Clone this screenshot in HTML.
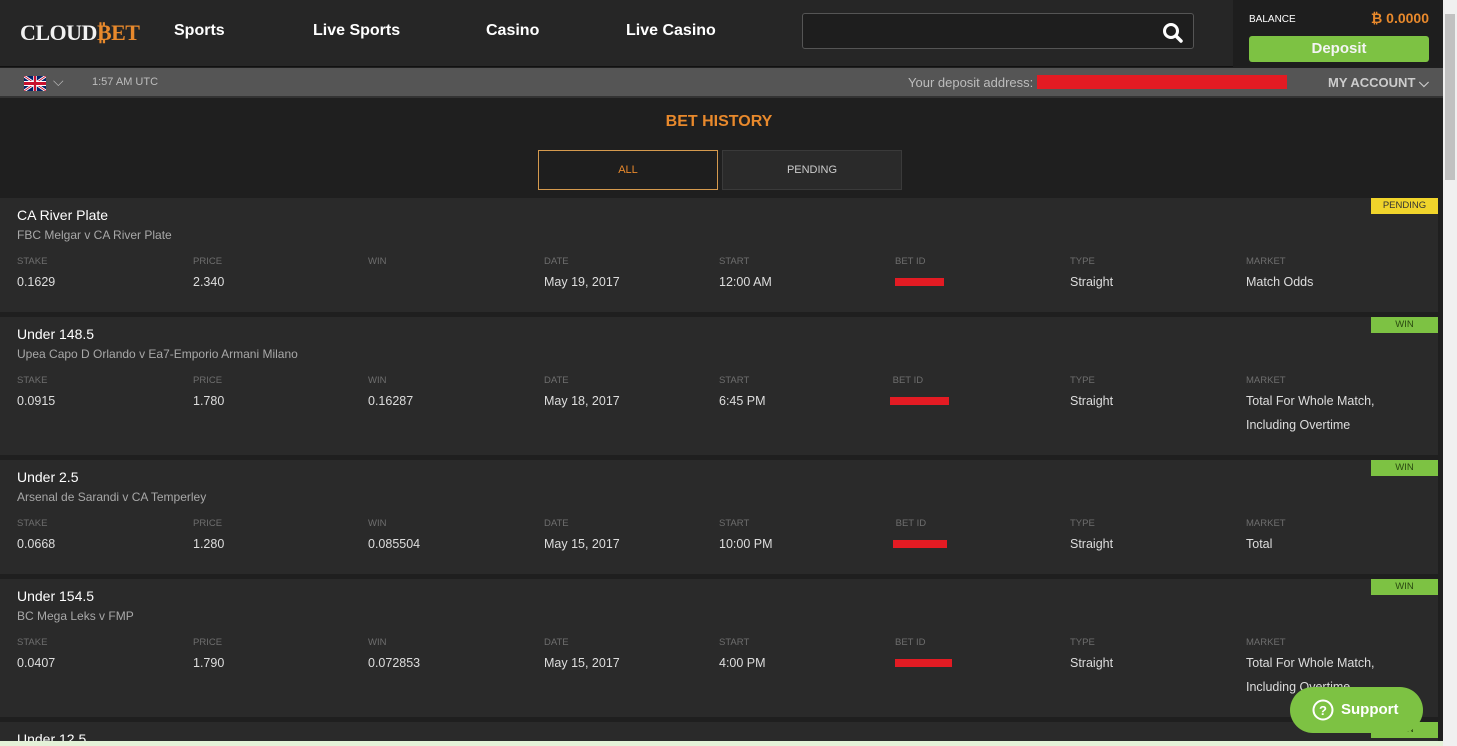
<!DOCTYPE html>
<html><head><meta charset="utf-8"><style>
*{box-sizing:border-box;margin:0;padding:0}
html,body{width:1457px;height:746px;overflow:hidden}
body{background:#1f1f1f;font-family:"Liberation Sans",sans-serif;position:relative;color:#eee}
.hdr{position:absolute;left:0;top:0;width:1443px;height:67px;background:#262626;border-bottom:1px solid #111}
.logo{position:absolute;left:20px;top:20px;font-family:"Liberation Serif",serif;font-weight:bold;font-size:22px;color:#f2f2f2;letter-spacing:-0.5px}
.logo span{color:#e8892c}
.nav{position:absolute;top:22px;font-weight:bold;font-size:16px;color:#fff}
.search{position:absolute;left:802px;top:13px;width:392px;height:36px;border:1px solid #555;border-radius:3px;background:#1e1e1e}
.bal{position:absolute;left:1233px;top:0;width:210px;height:67px;background:#1e1e1e}
.sub{position:absolute;left:0;top:68px;width:1443px;height:30px;background:#555;border-bottom:2px solid #333}
.sub .t{position:absolute;top:8px;font-size:12px;color:#bdbdbd}
.scroll{position:absolute;left:1443px;top:0;width:14px;height:746px;background:#f0f0f0}
.card{position:absolute;left:0;width:1438px;background:#2a2a2a}
.card .ti{position:absolute;left:17px;top:9px;font-size:14px;color:#fff}
.card .su{position:absolute;left:17px;top:30px;font-size:12px;color:#a8a8a8}
.col{position:absolute;top:58px}
.col .l{font-size:9.5px;color:#6e6e6e}
.col .v{font-size:12.5px;color:#ddd;line-height:24px;margin-top:3px}
.badge{position:absolute;right:0;top:0;width:67px;height:16px;font-size:9.5px;text-align:center;line-height:16px}
.red{display:inline-block;background:#e31b23;height:8px}
</style></head><body>
<div class="hdr">
<div class="logo">CLOUD<span>₿ET</span></div>
<div class="nav" style="left:174px">Sports</div>
<div class="nav" style="left:313px">Live Sports</div>
<div class="nav" style="left:486px">Casino</div>
<div class="nav" style="left:626px">Live Casino</div>
<div class="search"><svg width="24" height="24" viewBox="0 0 24 24" style="position:absolute;left:358px;top:7px"><circle cx="10" cy="10" r="6.5" stroke="#fff" stroke-width="3" fill="none"/><path d="M15 15l5 5" stroke="#fff" stroke-width="3.5" stroke-linecap="round"/></svg></div>
<div class="bal">
<div style="position:absolute;left:16px;top:14px;font-size:10px;color:#fff">BALANCE</div>
<div style="position:absolute;right:14px;top:10px;font-size:14px;font-weight:bold;color:#e8892c">₿ 0.0000</div>
<div style="position:absolute;left:16px;top:36px;width:180px;height:26px;background:#7dc243;border-radius:3px;text-align:center;line-height:26px;font-weight:bold;font-size:15px;color:#f4f4f4">Deposit</div>
</div>
</div>
<div class="sub">
<svg width="22" height="15" viewBox="0 0 60 30" style="position:absolute;left:24px;top:8px" preserveAspectRatio="none"><rect width="60" height="30" fill="#012169"/><path d="M0 0L60 30M60 0L0 30" stroke="#fff" stroke-width="6"/><path d="M0 0L60 30M60 0L0 30" stroke="#C8102E" stroke-width="2"/><path d="M30 0v30M0 15h60" stroke="#fff" stroke-width="10"/><path d="M30 0v30M0 15h60" stroke="#C8102E" stroke-width="6"/></svg>
<div class="t" style="left:53px;top:5px;font-size:14px">⌵</div>
<div class="t" style="left:92px;font-size:11px">1:57 AM UTC</div>
<div class="t" style="left:908px;font-size:13px;top:7px">Your deposit address: <span class="red" style="width:250px;height:14px;vertical-align:-2px"></span></div>
<div class="t" style="left:1328px;top:7px;font-size:13px;font-weight:bold;color:#ccc">MY ACCOUNT ⌵</div>
</div>
<div style="position:absolute;left:0;top:113px;width:1438px;text-align:center;font-size:16px;font-weight:bold;color:#e8892c">BET HISTORY</div>
<div style="position:absolute;left:538px;top:150px;width:180px;height:40px;border:1px solid #d59a4e;background:#1e1e1e;text-align:center;line-height:38px;font-size:11px;color:#e8892c">ALL</div>
<div style="position:absolute;left:722px;top:150px;width:180px;height:40px;border:1px solid #3a3a3a;background:#2a2a2a;text-align:center;line-height:38px;font-size:11px;color:#ccc">PENDING</div>

<div class="card" style="top:198px;height:114px">
<div class="badge" style="background:#f0d42b;color:#333">PENDING</div>
<div class="ti">CA River Plate</div><div class="su">FBC Melgar v CA River Plate</div>
<div class="col" style="left:17px"><div class="l">STAKE</div><div class="v">0.1629</div></div>
<div class="col" style="left:193px"><div class="l">PRICE</div><div class="v">2.340</div></div>
<div class="col" style="left:368px"><div class="l">WIN</div><div class="v"></div></div>
<div class="col" style="left:544px"><div class="l">DATE</div><div class="v">May 19, 2017</div></div>
<div class="col" style="left:719px"><div class="l">START</div><div class="v">12:00 AM</div></div>
<div class="col" style="left:895px"><div class="l">BET ID</div><div class="v"><span class="red" style="width:49px"></span></div></div>
<div class="col" style="left:1070px"><div class="l">TYPE</div><div class="v">Straight</div></div>
<div class="col" style="left:1246px"><div class="l">MARKET</div><div class="v">Match Odds</div></div>
</div>

<div class="card" style="top:317px;height:138px">
<div class="badge" style="background:#7dc243;color:#2a4a10">WIN</div>
<div class="ti">Under 148.5</div><div class="su">Upea Capo D Orlando v Ea7-Emporio Armani Milano</div>
<div class="col" style="left:17px"><div class="l">STAKE</div><div class="v">0.0915</div></div>
<div class="col" style="left:193px"><div class="l">PRICE</div><div class="v">1.780</div></div>
<div class="col" style="left:368px"><div class="l">WIN</div><div class="v">0.16287</div></div>
<div class="col" style="left:544px"><div class="l">DATE</div><div class="v">May 18, 2017</div></div>
<div class="col" style="left:719px"><div class="l">START</div><div class="v">6:45 PM</div></div>
<div class="col" style="left:890px"><div class="l">&nbsp;BET ID</div><div class="v"><span class="red" style="width:59px"></span></div></div>
<div class="col" style="left:1070px"><div class="l">TYPE</div><div class="v">Straight</div></div>
<div class="col" style="left:1246px"><div class="l">MARKET</div><div class="v">Total For Whole Match,<br>Including Overtime</div></div>
</div>

<div class="card" style="top:460px;height:114px">
<div class="badge" style="background:#7dc243;color:#2a4a10">WIN</div>
<div class="ti">Under 2.5</div><div class="su">Arsenal de Sarandi v CA Temperley</div>
<div class="col" style="left:17px"><div class="l">STAKE</div><div class="v">0.0668</div></div>
<div class="col" style="left:193px"><div class="l">PRICE</div><div class="v">1.280</div></div>
<div class="col" style="left:368px"><div class="l">WIN</div><div class="v">0.085504</div></div>
<div class="col" style="left:544px"><div class="l">DATE</div><div class="v">May 15, 2017</div></div>
<div class="col" style="left:719px"><div class="l">START</div><div class="v">10:00 PM</div></div>
<div class="col" style="left:893px"><div class="l">&nbsp;BET ID</div><div class="v"><span class="red" style="width:54px"></span></div></div>
<div class="col" style="left:1070px"><div class="l">TYPE</div><div class="v">Straight</div></div>
<div class="col" style="left:1246px"><div class="l">MARKET</div><div class="v">Total</div></div>
</div>

<div class="card" style="top:579px;height:138px">
<div class="badge" style="background:#7dc243;color:#2a4a10">WIN</div>
<div class="ti">Under 154.5</div><div class="su">BC Mega Leks v FMP</div>
<div class="col" style="left:17px"><div class="l">STAKE</div><div class="v">0.0407</div></div>
<div class="col" style="left:193px"><div class="l">PRICE</div><div class="v">1.790</div></div>
<div class="col" style="left:368px"><div class="l">WIN</div><div class="v">0.072853</div></div>
<div class="col" style="left:544px"><div class="l">DATE</div><div class="v">May 15, 2017</div></div>
<div class="col" style="left:719px"><div class="l">START</div><div class="v">4:00 PM</div></div>
<div class="col" style="left:895px"><div class="l">BET ID</div><div class="v"><span class="red" style="width:57px"></span></div></div>
<div class="col" style="left:1070px"><div class="l">TYPE</div><div class="v">Straight</div></div>
<div class="col" style="left:1246px"><div class="l">MARKET</div><div class="v">Total For Whole Match,<br>Including Overtime</div></div>
</div>

<div class="card" style="top:722px;height:24px">
<div class="badge" style="background:#7dc243;color:#2a4a10">WIN</div>
<div class="ti">Under 12.5</div>
</div>
<div style="position:absolute;left:0;top:741px;width:1443px;height:5px;background:#e4f2d8"></div>

<div style="position:absolute;left:1290px;top:687px;width:133px;height:46px;border-radius:23px;background:#7dc243">
<svg width="22" height="22" viewBox="0 0 22 22" style="position:absolute;left:22px;top:12px"><circle cx="11" cy="11" r="9.5" fill="none" stroke="#fff" stroke-width="2"/><text x="11" y="16" text-anchor="middle" font-family="Liberation Sans" font-size="13" font-weight="bold" fill="#fff">?</text></svg>
<div style="position:absolute;left:51px;top:14px;font-weight:bold;font-size:15px;color:#fff">Support</div>
</div>
<div class="scroll"><div style="position:absolute;left:2px;top:14px;width:10px;height:166px;background:#c1c1c1"></div></div>
</body></html>
